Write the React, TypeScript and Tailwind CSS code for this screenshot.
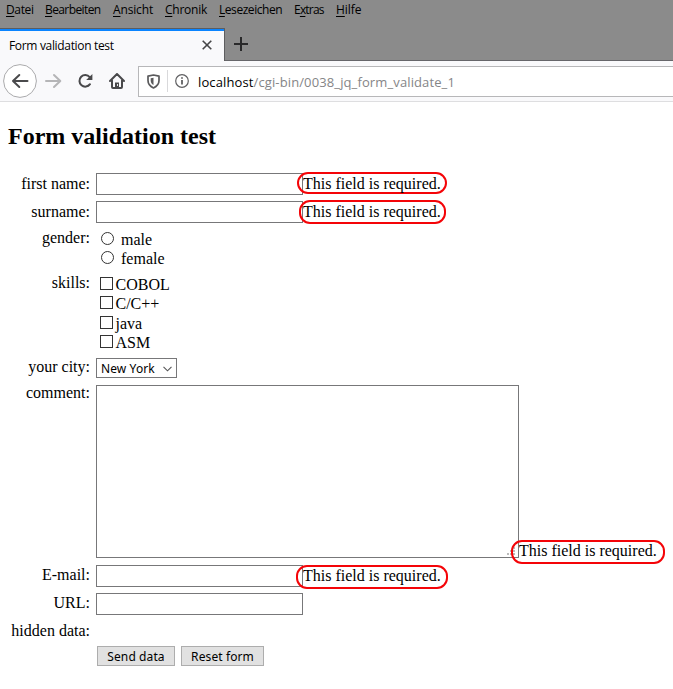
import React from 'react';

const serif = "font-['Liberation_Serif',serif]";

function MenuBar() {
  const items: [string, string, string, string][] = [
    ['', 'D', 'atei', 'w-[39px] tracking-[-0.35px]'],
    ['', 'B', 'earbeiten', 'w-[68px] tracking-[-0.6px]'],
    ['', 'A', 'nsicht', 'w-[52px] tracking-[-0.15px]'],
    ['', 'C', 'hronik', 'w-[54px] tracking-[-0.25px]'],
    ['', 'L', 'esezeichen', 'w-[75px] tracking-[-0.45px]'],
    ['E', 'x', 'tras', 'w-[42px] tracking-[-0.8px]'],
    ['', 'H', 'ilfe', 'w-[40px] tracking-[-0.05px]'],
  ];
  return (
    <nav className="flex h-7 pl-1.5 text-[12px] leading-5 text-black">
      {items.map(([a, b, c, w]) => (
        <span key={b} className={`${w} shrink-0 whitespace-nowrap`}>
          {a}<span className="underline underline-offset-2">{b}</span>{c}
        </span>
      ))}
    </nav>
  );
}

function TabStrip() {
  return (
    <div className="flex h-[33px]">
      <div className="flex h-full w-[225px] shrink-0 items-start justify-between border-t border-r border-[#5d5d5f] bg-[#f9f9fb]">
        <div className="flex h-full w-full justify-between border-t-2 border-[#0a84ff] pl-[9px] pr-3">
          <span className="pt-[5px] text-[12px] leading-5 tracking-[-0.33px]">Form validation test</span>
          <svg className="mt-[9px]" width="10" height="10" viewBox="0 0 10 10" fill="none" stroke="#454547" strokeWidth="1.6"><path d="M.7.7l8.6 8.6M9.3.7L.7 9.3" /></svg>
        </div>
      </div>
      <div className="flex-1 border-b border-[#66666a] pl-[9px] pt-[9px]">
        <svg width="14" height="14" viewBox="0 0 14 14" stroke="#29292a" strokeWidth="2"><path d="M7 0v14M0 7h14" /></svg>
      </div>
    </div>
  );
}

function Toolbar() {
  return (
    <div className="flex h-[41px] border-b border-[#dedee0] bg-[#f9f9fb] pl-[3px]">
      <svg className="mt-[3px] shrink-0" width="34" height="34" viewBox="0 0 34 34" fill="none">
        <circle cx="17" cy="17" r="16.4" fill="#fff" stroke="#aaaaac" />
        <path d="M24.500 17H10M16.3 11L10 17l6.3 6" stroke="#4a4a4c" strokeWidth="2" strokeLinecap="round" strokeLinejoin="round" />
      </svg>
      <svg className="ml-2 mt-3 shrink-0" width="17" height="16" viewBox="0 0 17 16" fill="none" stroke="#b5b5b7" strokeWidth="2" strokeLinecap="round" strokeLinejoin="round"><path d="M1 8h14M9 2l6.3 6L9 14" /></svg>
      <svg className="ml-[15px] mt-3 shrink-0" width="17" height="16" viewBox="0 0 17 16" fill="none" stroke="#49494b" strokeWidth="2">
        <path d="M12.7 4.1A5.8 5.8 0 1 0 13 11.200" strokeLinecap="round" /><path d="M15.4 1v6H9.2z" fill="#49494b" stroke="none" />
      </svg>
      <svg className="ml-[15px] mt-3 shrink-0" width="16" height="16" viewBox="0 0 16 16" fill="none" stroke="#49494b" strokeWidth="2" strokeLinecap="round" strokeLinejoin="round">
        <path d="M1 8l7-7 7 7M3 7.5V14q0 1 1 1h8q1 0 1-1V7.5" /><path d="M6 15V9.500h4V15z" fill="#49494b" stroke="none" /><path d="M8.500 11.500v1" stroke="#f9f9fb" strokeWidth="1" />
      </svg>
      <div className="ml-[13px] mt-[5px] flex h-[31px] flex-1 border border-r-0 border-[#b7b7b9] bg-white pl-2 text-[13px]">
        <svg className="mt-[7px] shrink-0" width="13" height="15" viewBox="0 0 13 15" fill="none" stroke="#5a5a5c" strokeWidth="1.7" strokeLinejoin="round">
          <path d="M6.5 1L12 2.2v4.3c0 3.5-2 5.8-5.5 7.4C3 12.300 1 10 1 6.500V2.200z" /><path d="M6.500 3.700v7.400C4.700 10 3.700 8.600 3.700 6.500V4.300z" fill="#5a5a5c" stroke="none" />
        </svg>
        <span className="ml-[7px] mt-[3px] h-[22px] w-px bg-[#d9d9db]" />
        <svg className="ml-[7px] mt-[7px] shrink-0" width="14" height="14" viewBox="0 0 14 14" fill="none" stroke="#606062">
          <circle cx="7" cy="7" r="6.300" strokeWidth="1.200" /><path d="M7 6v4.500M7 3.200v1.600" strokeWidth="1.800" />
        </svg>
        <span className="ml-[9px] mt-[5px] whitespace-nowrap leading-5 tracking-[0.12px] text-[#858587]"><span className="text-black">localhost</span>/cgi-bin/0038_jq_form_validate_1</span>
      </div>
    </div>
  );
}

function Row({ label, height, pad, children }: { label: string; height: string; pad: string; children?: React.ReactNode }) {
  return (
    <div className={`flex ${height}`}>
      <div className={`mr-1.5 w-[90px] shrink-0 whitespace-nowrap text-right ${pad}`}>{label}</div>
      {children}
    </div>
  );
}

function RequiredMark({ box, text }: { box: string; text: string }) {
  return (
    <span className="relative h-0 w-0">
      <span className={`absolute whitespace-nowrap border-2 border-[#f40408] ${box}`} />
      <span className={`absolute left-0 whitespace-nowrap ${text}`}>This field is required.</span>
    </span>
  );
}

const field = 'mt-[3px] h-[22px] w-[207px] shrink-0 border border-[#777779] bg-white outline-none';

export default function App() {
  return (
    <div className="h-[689px] w-[673px] overflow-hidden bg-white font-['Open_Sans',sans-serif] text-black">
      <header className="bg-[#8b8b8b]"><MenuBar /><TabStrip /><Toolbar /></header>
      <main className={`${serif} text-[16px] leading-[18px]`}>
        <h1 className="h-[68px] pl-2 pt-[20px] text-[24px] font-bold leading-[28px]">Form validation test</h1>
        <form onSubmit={(e) => e.preventDefault()}>
          <Row label="first name:" height="h-7" pad="pt-[5px]">
            <input className={field} />
            <RequiredMark box="-left-1.5 top-[2px] h-[22px] w-[150px] rounded-[11px]" text="top-[5px]" />
          </Row>
          <Row label="surname:" height="h-7" pad="pt-[5px]">
            <input className={field} />
            <RequiredMark box="-left-1 top-[2px] h-6 w-[147px] rounded-[11px]" text="top-[5px]" />
          </Row>
          <Row label="gender:" height="h-[46px]" pad="pt-[3px]">
            <div className="pl-[5px] pt-[5px]">
              {['male', 'female'].map((v) => (
                <label key={v} className="flex h-[19px]">
                  <input type="radio" name="gender" className="mr-[7px] mt-px h-[13px] w-[13px] appearance-none rounded-full border border-[#333] bg-white" />{v}
                </label>
              ))}
            </div>
          </Row>
          <Row label="skills:" height="h-[83px]" pad="pt-[2px]">
            <div className="pl-1 pt-1">
              {([['COBOL', 'h-[19px]'], ['C/C++', 'h-5'], ['java', 'h-[19px]'], ['ASM', 'h-[19px]']]).map(([v, h]) => (
                <label key={v} className={`flex ${h}`}>
                  <input type="checkbox" className="mr-[2.5px] mt-px h-[13px] w-[13px] appearance-none border border-[#333] bg-white" />{v}
                </label>
              ))}
            </div>
          </Row>
          <Row label="your city:" height="h-[27px]" pad="pt-[3px]">
            <button type="button" className="mt-[3px] flex h-5 w-[81px] items-center justify-between border border-[#777779] bg-white pl-1 pr-1 font-['Noto_Sans',sans-serif] text-[12px] leading-[18px]">
              <span className="pt-px tracking-[0.1px]">New York</span>
              <svg className="mt-px" width="9" height="6" viewBox="0 0 9 6" fill="none" stroke="#555557" strokeWidth="1.100"><path d="M.5.8l4 4 4-4" /></svg>
            </button>
          </Row>
          <Row label="comment:" height="h-[180px]" pad="pt-[2px]">
            <div className="relative mt-[3px] h-[173px] w-[423px] shrink-0">
              <textarea className="block h-full w-full resize-none border border-[#777779] bg-white outline-none" />
              <svg className="absolute bottom-[3px] right-[4px]" width="8" height="8" viewBox="0 0 8 8" fill="#bbb"><path d="M6 0h2v2H6zM3 3h2v2H3zM6 3h2v2H6zM0 6h2v2H0zM3 6h2v2H3zM6 6h2v2H6z" /></svg>
            </div>
            <RequiredMark box="-left-2 top-[158px] h-6 w-[154px] rounded-[11px]" text="top-[160px]" />
          </Row>
          <Row label="E-mail:" height="h-7" pad="pt-[4px]">
            <input className={field} />
            <RequiredMark box="-left-[7px] top-[3px] h-6 w-[152px] rounded-[11px]" text="top-[5px]" />
          </Row>
          <Row label="URL:" height="h-7" pad="pt-[4px]"><input className={field} /></Row>
          <Row label="hidden data:" height="h-7" pad="pt-[4px]" />
          <div className="flex gap-1.5 pl-[97px] font-['Noto_Sans',sans-serif] text-[12px] leading-[18px] tracking-[0.1px]">
            <button type="submit" className="h-5 w-[78px] whitespace-nowrap border border-[#adadad] bg-[#e1e1e1] pt-px">Send data</button>
            <button type="reset" className="h-5 w-[83px] whitespace-nowrap border border-[#adadad] bg-[#e1e1e1] pt-px">Reset form</button>
          </div>
        </form>
      </main>
    </div>
  );
}
